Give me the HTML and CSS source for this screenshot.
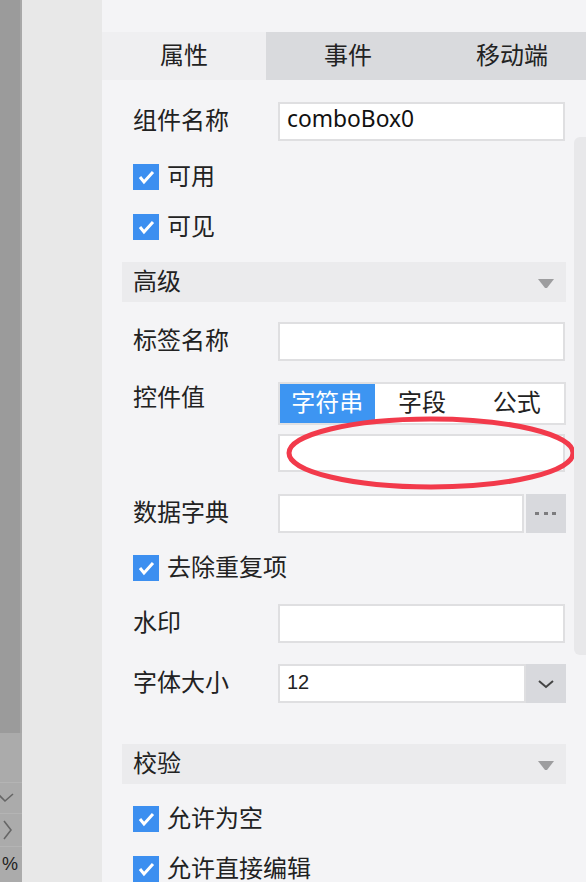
FILE: index.html
```html
<!DOCTYPE html>
<html lang="zh-CN">
<head>
<meta charset="utf-8">
<title>属性面板</title>
<link rel="stylesheet" href="styles.css">
</head>
<body>
<div class="app">
  <div class="rail">
    <div class="rail-top"></div>
    <div class="rail-gap"></div>
    <div class="rail-item rail-check">
      <svg width="14" height="10" viewBox="0 0 14 10"><polyline points="-1,2 5,8 13,1" fill="none" stroke="#666" stroke-width="1.6"/></svg>
    </div>
    <div class="rail-item rail-next">
      <svg width="12" height="20" viewBox="0 0 12 20"><polyline points="3,1 10,10 3,19" fill="none" stroke="#666" stroke-width="1.6"/></svg>
    </div>
    <div class="rail-item rail-pct">%</div>
  </div>
  <div class="side"></div>
  <div class="panel">
    <div class="tabs">
      <div class="tab active"><span class="t">属性</span></div>
      <div class="tab"><span class="t">事件</span></div>
      <div class="tab"><span class="t">移动端</span></div>
    </div>
    <div class="body">
      <div class="field row">
        <div class="label t">组件名称</div>
        <div class="input text">comboBox0</div>
      </div>
      <div class="check row-cb">
        <span class="box"><svg width="26" height="26" viewBox="0 0 26 26"><polyline points="7,13 11,18 20,8" fill="none" stroke="#fff" stroke-width="3"/></svg></span>
        <span class="t">可用</span>
      </div>
      <div class="check row-cb">
        <span class="box"><svg width="26" height="26" viewBox="0 0 26 26"><polyline points="7,13 11,18 20,8" fill="none" stroke="#fff" stroke-width="3"/></svg></span>
        <span class="t">可见</span>
      </div>
      <div class="section sec-first">
        <span class="t">高级</span>
        <svg width="16" height="9" viewBox="0 0 16 9"><polygon points="0,0 16,0 9,9 7,9" fill="#9d9d9f"/></svg>
      </div>
      <div class="field after-section">
        <div class="label t">标签名称</div>
        <div class="input"></div>
      </div>
      <div class="field field-top row-seg">
        <div class="label label-top">控件值</div>
        <div class="control-stack">
          <div class="segmented">
            <div class="seg on"><span class="t">字符串</span></div>
            <div class="seg"><span class="t">字段</span></div>
            <div class="seg"><span class="t">公式</span></div>
          </div>
          <div class="input input-short"></div>
          <svg class="mark" width="296" height="78" viewBox="0 0 296 78"><ellipse cx="148" cy="39" rx="142" ry="34" fill="none" stroke="#f23a4b" stroke-width="5"/></svg>
        </div>
      </div>
      <div class="field row">
        <div class="label t">数据字典</div>
        <div class="combo">
          <div class="input grow"></div>
          <div class="btn btn-dots">
            <svg width="22" height="4" viewBox="0 0 22 4"><rect x="0" y="0" width="4" height="3" fill="#7c7c7e"/><rect x="9" y="0" width="4" height="3" fill="#7c7c7e"/><rect x="17" y="0" width="4" height="3" fill="#7c7c7e"/></svg>
          </div>
        </div>
      </div>
      <div class="check row-tight">
        <span class="box"><svg width="26" height="26" viewBox="0 0 26 26"><polyline points="7,13 11,18 20,8" fill="none" stroke="#fff" stroke-width="3"/></svg></span>
        <span class="t">去除重复项</span>
      </div>
      <div class="field row">
        <div class="label t">水印</div>
        <div class="input"></div>
      </div>
      <div class="field row-tight">
        <div class="label t">字体大小</div>
        <div class="combo">
          <div class="input grow num">12</div>
          <div class="btn btn-select">
            <svg width="16" height="10" viewBox="0 0 16 10"><polyline points="1,2 8,8 15,2" fill="none" stroke="#444" stroke-width="2"/></svg>
          </div>
        </div>
      </div>
      <div class="section sec-second">
        <span class="t">校验</span>
        <svg width="16" height="9" viewBox="0 0 16 9"><polygon points="0,0 16,0 9,9 7,9" fill="#9d9d9f"/></svg>
      </div>
      <div class="check row-tight">
        <span class="box"><svg width="26" height="26" viewBox="0 0 26 26"><polyline points="7,13 11,18 20,8" fill="none" stroke="#fff" stroke-width="3"/></svg></span>
        <span class="t">允许为空</span>
      </div>
      <div class="check row-cb">
        <span class="box"><svg width="26" height="26" viewBox="0 0 26 26"><polyline points="7,13 11,18 20,8" fill="none" stroke="#fff" stroke-width="3"/></svg></span>
        <span class="t">允许直接编辑</span>
      </div>
    </div>
    <div class="scrollbar"></div>
  </div>
</div>
</body>
</html>
```

FILE: styles.css
```css
* { box-sizing: border-box; }
html, body { margin: 0; padding: 0; }
body {
  font-family: "Noto Sans CJK SC", "Noto Sans", sans-serif;
  color: #222;
  background: #f4f4f6;
  overflow: hidden;
}
.app { display: flex; height: 882px; overflow: hidden; }

/* text nudged slightly upward to sit like the native labels */
.t { display: block; padding-bottom: 5px; }

/* left rail */
.rail { width: 22px; flex-shrink: 0; display: flex; flex-direction: column; background: #ababab; }
.rail-top { height: 733px; background: #9b9b9b; border-right: 2px solid #a8a8a8; }
.rail-gap { height: 49px; }
.rail-item { border-top: 1px solid #b4b4b4; display: flex; align-items: center; overflow: hidden; }
.rail-check { height: 31px; }
.rail-next { height: 33px; padding-left: 1px; }
.rail-pct { flex: 1; font: 18px "Liberation Sans", sans-serif; color: #222; padding-left: 2px; }

.side { width: 80px; flex-shrink: 0; background: #e8e8e8; }

/* panel */
.panel { position: relative; width: 484px; flex-shrink: 0; overflow: hidden; padding-top: 32px; background: #f4f4f6; }
.tabs { display: flex; height: 48px; }
.tab {
  width: 164px; flex-shrink: 0;
  display: flex; align-items: center; justify-content: center;
  font-size: 24px; line-height: 30px; background: #d9dadd;
}
.tab.active { background: #efeff1; }

.body { padding: 0 20px; }

.field { display: flex; align-items: center; padding-left: 11px; }
.label { width: 145px; flex-shrink: 0; font-size: 24px; line-height: 30px; }
.field-top { align-items: flex-start; }
.label-top { line-height: 28px; }

.row { margin-top: 22px; }
.row-tight { margin-top: 21px; }
.row-cb { margin-top: 22px; }
.after-section { margin-top: 20px; }
.row-seg { margin-top: 21px; }

.input {
  width: 287px; height: 39px;
  background: #fff;
  border: 2px solid #dfdfe1;
}
.input.text { font: 22.8px "Noto Sans", sans-serif; line-height: 30px; padding-left: 7px; color: #111; }
.input.num { font: 20px "Liberation Sans", sans-serif; line-height: 33px; padding-left: 7px; color: #222; }
.input-short { height: 38px; margin-top: 9px; }

.combo { display: flex; width: 288px; height: 39px; }
.combo .grow { flex: 1; width: auto; height: 39px; }
.btn { width: 40px; flex-shrink: 0; background: #d8d9dd; display: flex; align-items: center; justify-content: center; }
.btn-dots { margin-left: 2px; }
.btn-dots svg { margin-top: 1px; }

.check { display: flex; align-items: center; gap: 8px; height: 28px; padding-left: 11px; font-size: 24px; line-height: 30px; }
.box { width: 26px; height: 26px; background: #3c8ff0; display: block; flex-shrink: 0; }
.box svg { display: block; }

.section {
  display: flex; align-items: center; justify-content: space-between;
  height: 40px; background: #ebebed;
  padding: 0 12px 0 11px; font-size: 24px; line-height: 30px;
}
.section svg { margin-top: 2px; }
.sec-first { margin-top: 21px; }
.sec-second { margin-top: 41px; }

.control-stack { position: relative; width: 288px; }
.segmented {
  display: flex; height: 43px;
  border: 2px solid #e0e0e2; background: #fff;
}
.seg { flex: 1; display: flex; align-items: center; justify-content: center; font-size: 24px; line-height: 30px; }
.seg.on { background: #3d95f2; color: #fff; }
.mark { position: absolute; left: 5px; top: 32px; }

.scrollbar {
  position: absolute; left: 472px; top: 137px;
  width: 20px; height: 518px;
  background: #e8e8ea; border-radius: 6px;
}
```
